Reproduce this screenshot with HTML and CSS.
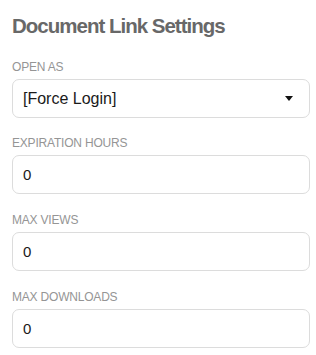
FILE: index.html
```
<html><head>
	<meta charset="utf-8">
	<title>Document Link Settings</title>
	<link rel="stylesheet" href="styles.css">
</head>
<body>
	<div class="panel">
		<h2 class="title">Document Link Settings</h2>
		<div class="field open-as">
			<label class="label">Open As</label>
			<div class="input select">
				<span>[Force Login]</span>
				<svg class="caret" width="8" height="5" viewBox="0 0 8 5"><path d="M0 0 L8 0 L4 5 Z" fill="#111"/></svg>
			</div>
		</div>
		<div class="field">
			<label class="label">Expiration Hours</label>
			<div class="input">0</div>
		</div>
		<div class="field">
			<label class="label">Max Views</label>
			<div class="input">0</div>
		</div>
		<div class="field">
			<label class="label">Max Downloads</label>
			<div class="input">0</div>
		</div>
	</div>
</body></html>
```
FILE: styles.css
```
* {
	margin: 0;
	padding: 0;
	box-sizing: border-box;
}

body {
	font-family: "Liberation Sans", Arial, sans-serif;
	color: #222;
	background: #fff;
}

.panel {
	padding: 14px 6px 0 12px;
	display: flex;
	flex-direction: column;
	gap: 20px;
}

.title {
	font-size: 20.5px;
	font-weight: bold;
	color: #686868;
	line-height: 24px;
	letter-spacing: -1px;
	margin-bottom: 3px;
}

.field {
	display: flex;
	flex-direction: column;
	gap: 6px;
}

.open-as {
	margin-bottom: -1px;
}

.label {
	font-size: 12px;
	line-height: 12px;
	letter-spacing: -0.2px;
	text-transform: uppercase;
	color: #959595;
}

.input {
	height: 39px;
	border: 1px solid #dcdcdc;
	border-radius: 7px;
	padding: 0 10px;
	display: flex;
	align-items: center;
	font-size: 15px;
	color: #1a1a1a;
}

.select {
	justify-content: space-between;
	font-size: 16px;
	padding-right: 16px;
}
```
